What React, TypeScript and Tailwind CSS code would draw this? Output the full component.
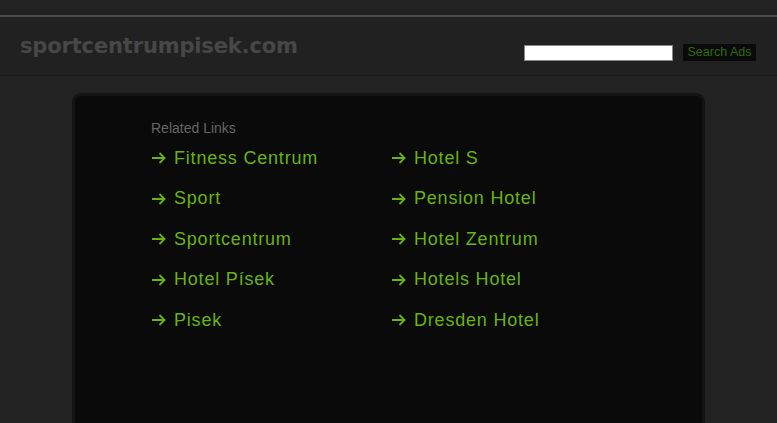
const leftLinks = ["Fitness Centrum", "Sport", "Sportcentrum", "Hotel Písek", "Pisek"];
const rightLinks = ["Hotel S", "Pension Hotel", "Hotel Zentrum", "Hotels Hotel", "Dresden Hotel"];

function LinkItem({ label }: { label: string }) {
  return (
    <a
      href="#"
      className="flex items-center h-[40.5px] text-[18px] tracking-[0.8px] text-[#68b414] font-['Liberation_Sans',Arial,sans-serif]"
    >
      <svg width="15" height="12" viewBox="0 0 15 12" className="mr-[8px] shrink-0">
        <path d="M1 6H13.5M8.5 1L13.5 6L8.5 11" fill="none" stroke="#68b414" strokeWidth="1.8" />
      </svg>
      <span>{label}</span>
    </a>
  );
}

export default function App() {
  return (
    <div className="min-h-[423px] bg-[#222222] font-['Liberation_Sans',Arial,sans-serif] overflow-hidden">
      <div className="h-[15px]" />
      <div className="h-[2px] bg-[#4a4a4a]" />
      <header className="h-[59px] flex items-center justify-between pl-[20px] pr-[21px] border-b border-[#1c1c1c] bg-[#212121]">
        <div className="text-[21px] font-bold text-[#474747] font-['DejaVu_Sans',Verdana,sans-serif] tracking-[-0.15px] mt-[2px]">
          sportcentrumpisek.com
        </div>
        <div className="flex items-center gap-[10px] mt-[13px]">
          <input
            type="text"
            className="w-[149px] h-[16px] bg-white border border-[#888]"
          />
          <button className="w-[73px] h-[17px] bg-[#0a0a0a] text-[12.5px] leading-none text-[#316a0e]">
            Search Ads
          </button>
        </div>
      </header>
      <div className="pt-[17px] flex justify-center">
        <div className="w-[633px] h-[340px] rounded-t-[9px] border-[3px] border-b-0 border-[#141414] bg-[#0a0a0a] pl-[76px] pt-[23px]">
          <div className="text-[14px] text-[#666666] leading-[18px]">Related Links</div>
          <div className="flex mt-[1px]">
            <div className="w-[240px]">
              {leftLinks.map((l) => (
                <LinkItem key={l} label={l} />
              ))}
            </div>
            <div>
              {rightLinks.map((l) => (
                <LinkItem key={l} label={l} />
              ))}
            </div>
          </div>
        </div>
      </div>
    </div>
  );
}
